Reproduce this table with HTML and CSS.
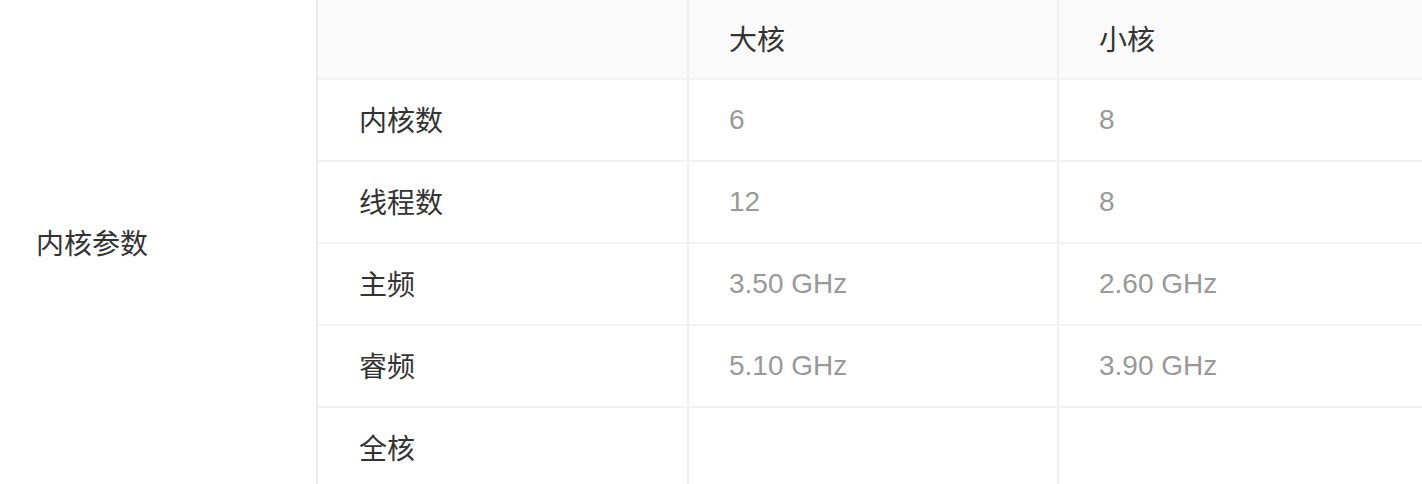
FILE: index.html
```html
<!DOCTYPE html>
<html lang="zh-CN">
<head>
<meta charset="utf-8">
<link rel="stylesheet" href="styles.css">
</head>
<body>
<div class="wrap">
  <div class="label">内核参数</div>
  <div class="table">
    <div class="row head">
      <div class="cell c1"></div>
      <div class="cell">大核</div>
      <div class="cell">小核</div>
    </div>
    <div class="row">
      <div class="cell c1">内核数</div>
      <div class="cell val">6</div>
      <div class="cell val">8</div>
    </div>
    <div class="row">
      <div class="cell c1">线程数</div>
      <div class="cell val">12</div>
      <div class="cell val">8</div>
    </div>
    <div class="row">
      <div class="cell c1">主频</div>
      <div class="cell val">3.50 GHz</div>
      <div class="cell val">2.60 GHz</div>
    </div>
    <div class="row">
      <div class="cell c1">睿频</div>
      <div class="cell val">5.10 GHz</div>
      <div class="cell val">3.90 GHz</div>
    </div>
    <div class="row">
      <div class="cell c1">全核</div>
      <div class="cell val"></div>
      <div class="cell val"></div>
    </div>
  </div>
</div>
</body>
</html>
```

FILE: styles.css
```css
html, body {
  margin: 0;
  padding: 0;
  background: #fff;
}
body {
  font-family: "Liberation Sans", "Noto Sans CJK SC", sans-serif;
  font-size: 28px;
  color: #333;
}
.wrap {
  display: flex;
  height: 484px;
  overflow: hidden;
}
.label {
  flex: none;
  width: 316px;
  box-sizing: border-box;
  padding-left: 36px;
  display: flex;
  align-items: center;
}
.table {
  flex: none;
  border-left: 2px solid #ebebeb;
  display: flex;
  flex-direction: column;
}
.row {
  display: flex;
  height: 82px;
  flex: none;
}
.row.head {
  height: 80px;
  background: #fafafa;
}
.cell {
  flex: none;
  width: 370px;
  box-sizing: border-box;
  padding-left: 40px;
  border-right: 2px solid #efefef;
  border-bottom: 2px solid #f2f2f2;
  display: flex;
  align-items: center;
}
.row.head .cell,
.cell.c1 {
  padding-bottom: 3px;
}
.cell.c1 {
  width: 371px;
  padding-left: 41px;
}
.val {
  color: #999;
}
```
